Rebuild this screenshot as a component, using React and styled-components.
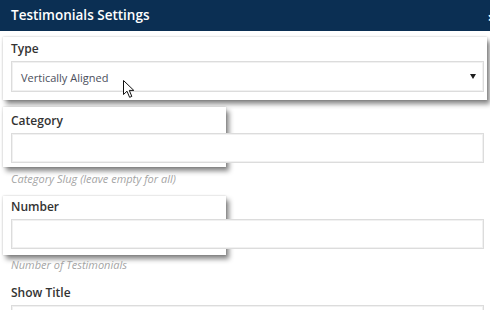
import React from 'react';
import styled, { createGlobalStyle } from 'styled-components';

const Global = createGlobalStyle`
	html, body {
		margin: 0;
		padding: 0;
		background: #fff;
	}
	body {
		font-family: 'Open Sans', 'Noto Sans', sans-serif;
		overflow: hidden;
	}
`

const Page = styled.div`
	position: relative;
	width: 490px;
	height: 310px;
	overflow: hidden;
	background: #fff;
`

const Header = styled.div`
	height: 31px;
	background: #0b2f53;
	color: #fff;
	display: flex;
	align-items: center;
	justify-content: space-between;
	padding-left: 11px;
	overflow: hidden;
`

const Title = styled.span`
	font-size: 13.5px;
	font-weight: 600;
	line-height: 20px;
	margin-top: -1px;
`

const Close = styled.span`
	font-size: 15px;
	font-weight: 700;
	margin-right: -6px;
	margin-top: 2px;
`

const Body = styled.div`
	padding: 9px 6px 0 11px;
`

const Field = styled.div`
	position: relative;
	margin-bottom: ${p => p.$gap}px;
`

const Highlight = styled.div`
	position: absolute;
	left: -8px;
	top: ${p => p.$top}px;
	height: ${p => p.$height}px;
	width: ${p => p.$width ? `${p.$width}px` : 'auto'};
	right: ${p => p.$width ? 'auto' : '-3px'};
	background: #fff;
	box-shadow: 0 0 2px rgba(0,0,0,0.2), 3px 4px 5px rgba(0,0,0,0.48);
	z-index: 0;
`

const Content = styled.div`
	position: relative;
	z-index: 1;
`

const Label = styled.div`
	font-size: 12px;
	font-weight: 600;
	line-height: 18px;
	color: #333;
	margin-bottom: 3px;
`

const Input = styled.div`
	box-sizing: border-box;
	height: ${p => p.$height || 30}px;
	border: 1px solid #dcdcdc;
	box-shadow: inset 0 0 0 1px #f1f1f1;
	background: #fff;
	display: flex;
	align-items: center;
	justify-content: space-between;
	padding: 0 7px 0 9px;
`

const Value = styled.span`
	font-size: 11px;
	color: #4b4f5c;
	margin-top: 1px;
`

const Caret = styled.span`
	width: 0;
	height: 0;
	border-left: 3px solid transparent;
	border-right: 3px solid transparent;
	border-top: 5px solid #1d1d1d;
`

const Help = styled.div`
	font-size: 11px;
	font-style: italic;
	line-height: 16px;
	color: #a4a4a4;
	margin-top: 8px;
`

const Cursor = styled.svg`
	position: absolute;
	left: 123px;
	top: 80px;
	z-index: 5;
`

export default function App() {
	return (
		<Page>
			<Global />
			<Header>
				<Title>Testimonials Settings</Title>
				<Close>×</Close>
			</Header>
			<Body>
				<Field $gap={20}>
					<Highlight $top={-3} $height={63} />
					<Content>
						<Label>Type</Label>
						<Input $height={31}>
							<Value>Vertically Aligned</Value>
							<Caret />
						</Input>
					</Content>
				</Field>
				<Field $gap={11}>
					<Highlight $top={-5} $height={60} $width={223} />
					<Content>
						<Label>Category</Label>
						<Input />
						<Help>Category Slug (leave empty for all)</Help>
					</Content>
				</Field>
				<Field $gap={11}>
					<Highlight $top={-2} $height={59} $width={223} />
					<Content>
						<Label>Number</Label>
						<Input />
						<Help>Number of Testimonials</Help>
					</Content>
				</Field>
				<Field $gap={0}>
					<Content>
						<Label>Show Title</Label>
						<Input />
					</Content>
				</Field>
			</Body>
			<Cursor width="14" height="19" viewBox="0 0 14 19">
				<path d="M0.5 0.5 L0.5 14.5 L4 11.2 L6.6 17.3 L8.8 16.4 L6.3 10.4 L10.8 10.4 Z" fill="#fff" stroke="#111" strokeWidth="1" strokeLinejoin="miter" />
			</Cursor>
		</Page>
	);
}
